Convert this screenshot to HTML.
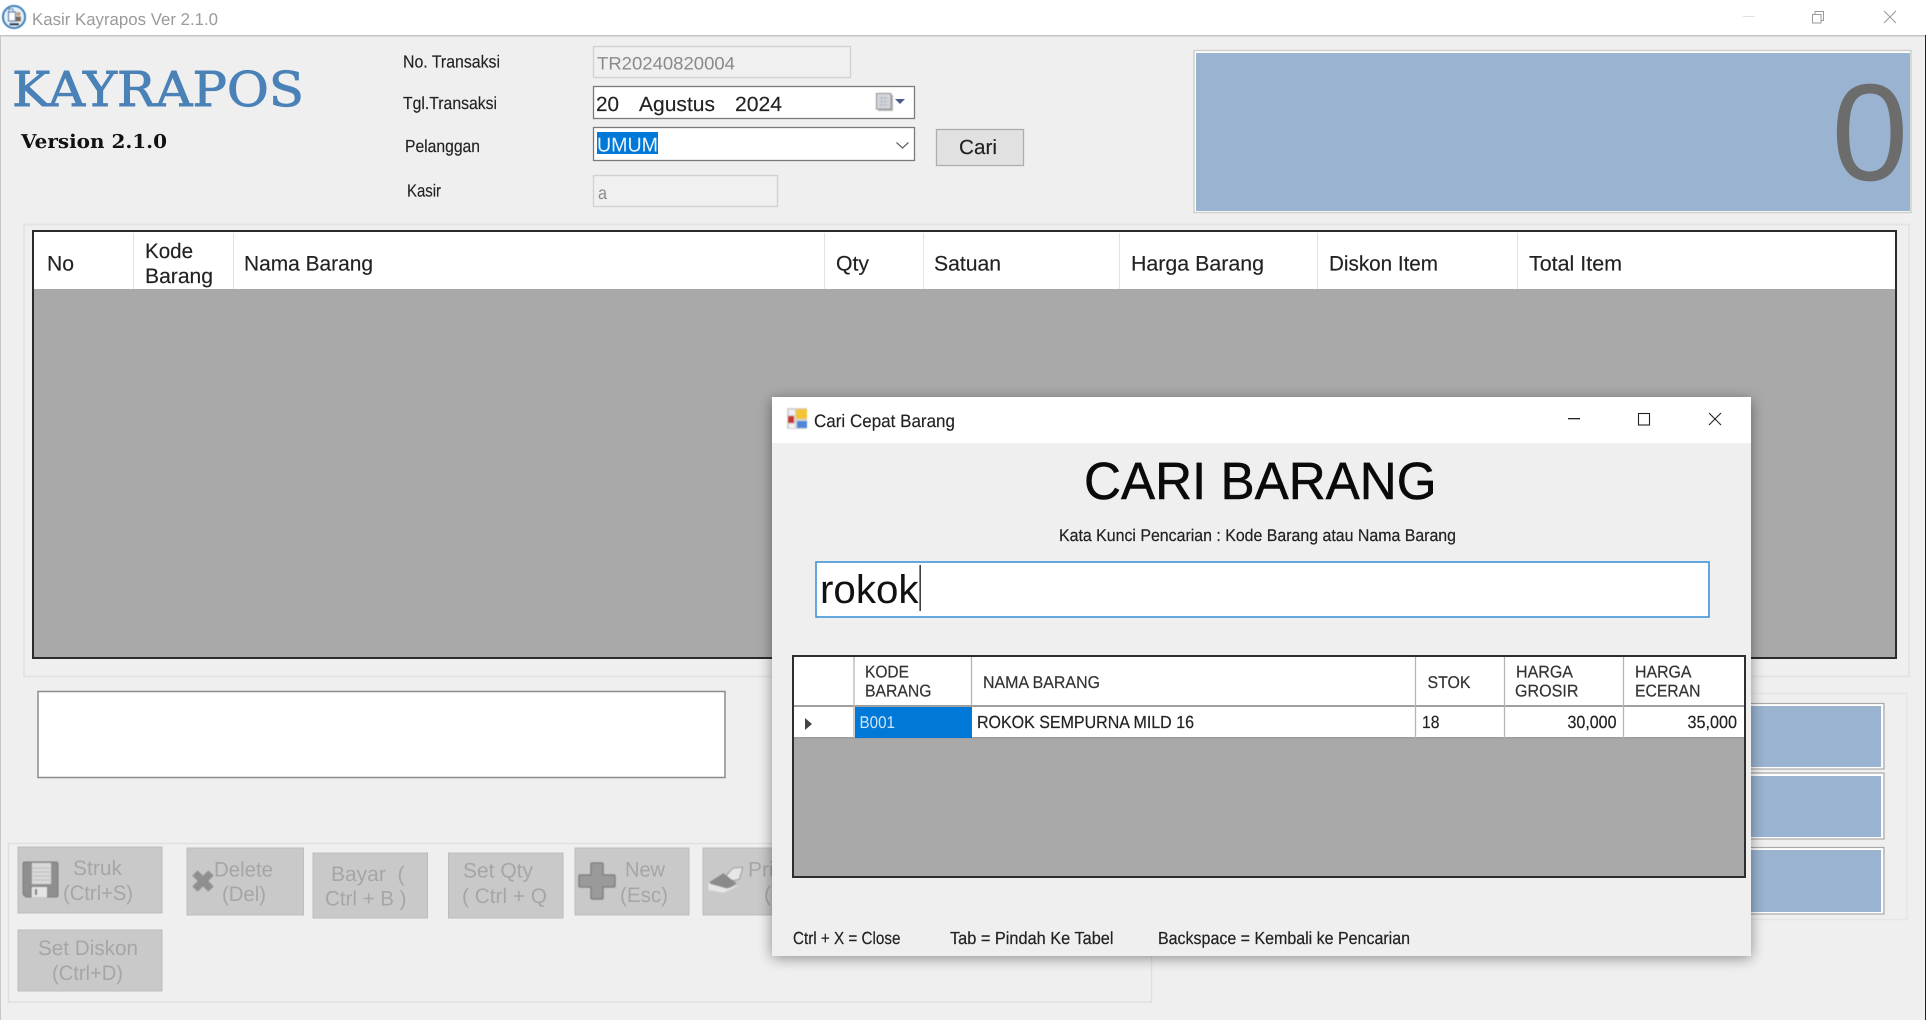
<!DOCTYPE html>
<html><head><meta charset="utf-8"><title>Kasir Kayrapos Ver 2.1.0</title>
<style>
html,body{margin:0;padding:0;background:#efefef;width:1926px;height:1020px;overflow:hidden}
svg{display:block}
text{font-family:"Liberation Sans",sans-serif;text-rendering:geometricPrecision;white-space:pre}
.lb{font-size:17.5px;fill:#222;stroke:#222;stroke-width:.15}
.h{font-size:21px;fill:#222;stroke:#222;stroke-width:.15}
.b{font-size:21px;fill:#a6a6a6}
.m{font-size:17px;fill:#333;stroke:#333;stroke-width:.2}
.r{font-size:17.5px;fill:#222;stroke:#222;stroke-width:.2}
.f{font-size:17.5px;fill:#222;stroke:#222;stroke-width:.2}
.d{font-size:18px;fill:#8a8a8a}
.v{font-size:20.5px;fill:#222;stroke:#222;stroke-width:.15}
</style></head><body>
<svg xmlns="http://www.w3.org/2000/svg" width="1926" height="1020" viewBox="0 0 1926 1020">
<defs>
<filter id="sh" x="-10%" y="-10%" width="120%" height="120%"><feGaussianBlur stdDeviation="7"/></filter>
<filter id="s" x="-10%" y="-10%" width="120%" height="120%"><feGaussianBlur stdDeviation=".45"/></filter>
<clipPath id="hc"><rect x="134" y="233" width="99" height="56"/></clipPath>
</defs>
<rect width="1926" height="1020" fill="#efefef"/>
<!-- title bar -->
<rect width="1926" height="35" fill="#fff"/>
<rect y="35" width="1926" height="1.5" fill="#c4c4c4"/>
<rect x="0" y="36" width="1" height="984" fill="#c8c8c8"/>
<rect x="1925" y="35" width="1" height="985" fill="#222"/>
<g filter="url(#s)">
<circle cx="14" cy="17" r="11" fill="#e6f1fa" stroke="#2f78b5" stroke-width="2"/>
<rect x="8.500" y="12" width="7" height="9" fill="#fff" stroke="#3c74a8" stroke-width="1.200"/>
<rect x="9" y="9" width="4" height="3" fill="none" stroke="#3c74a8"/>
<circle cx="18.500" cy="14" r="2" fill="#c79a63"/>
<rect x="16" y="16.500" width="5" height="5" fill="#7d6a55"/>
<rect x="9.500" y="23" width="9.500" height="2.500" fill="#2a3f55"/>
</g>
<text x="32" y="25" font-size="17" fill="#9a9a9a" textLength="186" lengthAdjust="spacingAndGlyphs">Kasir Kayrapos Ver 2.1.0</text>
<rect x="1743" y="16" width="12" height="1" fill="#e2e2e2"/>
<path d="M1812.500 14.500h8.500v8.500h-8.500zM1815 14.500v-3h8.500v9h-2.500" fill="none" stroke="#999" stroke-width="1"/>
<path d="M1884 11l12 12M1896 11l-12 12" fill="none" stroke="#999" stroke-width="1"/>

<!-- header -->
<text x="12" y="106" font-size="48" fill="#4a82b8" stroke="#4a82b8" stroke-width=".9" style="font-family:'DejaVu Serif',serif" textLength="292" lengthAdjust="spacingAndGlyphs">KAYRAPOS</text>
<text x="21" y="148" font-size="19" font-weight="bold" fill="#111" style="font-family:'DejaVu Serif',serif" textLength="146" lengthAdjust="spacingAndGlyphs">Version 2.1.0</text>

<text class="lb" x="403" y="67.500" textLength="97" lengthAdjust="spacingAndGlyphs">No. Transaksi</text>
<text class="lb" x="403" y="109" textLength="94" lengthAdjust="spacingAndGlyphs">Tgl.Transaksi</text>
<text class="lb" x="405" y="152" textLength="75" lengthAdjust="spacingAndGlyphs">Pelanggan</text>
<text class="lb" x="407" y="196.500" textLength="34" lengthAdjust="spacingAndGlyphs">Kasir</text>

<rect x="593.500" y="46.500" width="257" height="31" fill="#f0f0f0" stroke="#d2d2d2" stroke-width="1.400"/>
<text class="d" x="597" y="69.500" textLength="138" lengthAdjust="spacingAndGlyphs">TR20240820004</text>

<rect x="593.500" y="86.500" width="321" height="32" fill="#fff" stroke="#7a7a7a" stroke-width="1.300"/>
<text class="v" x="596" y="111" textLength="23" lengthAdjust="spacingAndGlyphs">20</text>
<text class="v" x="639" y="111" textLength="76" lengthAdjust="spacingAndGlyphs">Agustus</text>
<text class="v" x="735" y="111" textLength="47" lengthAdjust="spacingAndGlyphs">2024</text>
<g filter="url(#s)">
<rect x="878" y="95" width="15" height="16" fill="#b5b5b5"/>
<rect x="876.500" y="93.500" width="14.500" height="15.500" fill="#d4d7dd" stroke="#8a8a8a"/>
<path d="M879 98h9.500M879 101.500h9.500M879 105h9.500M881.500 96v11M885 96v11" stroke="#b9bdc5" stroke-width="1"/>
</g>
<path d="M895 99h10l-5 5z" fill="#4a5a8a"/>

<rect x="593.500" y="127.500" width="321" height="33" fill="#fff" stroke="#7a7a7a" stroke-width="1.300"/>
<rect x="597" y="132" width="61" height="22" fill="#0078d7"/>
<text x="597" y="151.500" font-size="20" fill="#e8f3fc" textLength="61" lengthAdjust="spacingAndGlyphs">UMUM</text>
<path d="M896.500 142.500l6 5.500 6-5.500" fill="none" stroke="#666" stroke-width="1.300"/>

<rect x="936.500" y="129.500" width="87" height="36" fill="#e1e1e1" stroke="#adadad" stroke-width="1.300"/>
<text class="v" x="959" y="154" textLength="38" lengthAdjust="spacingAndGlyphs">Cari</text>

<rect x="593.500" y="175.500" width="184" height="31" fill="#f0f0f0" stroke="#d2d2d2" stroke-width="1.400"/>
<text class="d" x="598" y="199" textLength="9" lengthAdjust="spacingAndGlyphs">a</text>

<!-- total panel -->
<rect x="1194" y="50.500" width="717" height="162" fill="#fff" stroke="#cfcfcf" stroke-width="1.500"/>
<rect x="1196" y="53" width="714" height="158" fill="#9ab3d1"/>
<text x="1831.500" y="180" font-size="138" fill="#6c6c6c">0</text>

<!-- main grid group -->
<rect x="24" y="224.500" width="1885" height="452" fill="none" stroke="#e4e4e4" stroke-width="2"/>
<rect x="33" y="231" width="1863" height="427" fill="#a9a9a9" stroke="#2b2b2b" stroke-width="2"/>
<rect x="34" y="232" width="1861" height="57" fill="#fff"/>
<path d="M133.500 233v56M233.500 233v56M824.500 233v56M923.500 233v56M1119.500 233v56M1317.500 233v56M1517.500 233v56" stroke="#e2e2e2" stroke-width="1"/>
<text class="h" x="47" y="270.500" textLength="27" lengthAdjust="spacingAndGlyphs">No</text>
<g clip-path="url(#hc)">
<text class="h" x="145" y="258" textLength="48" lengthAdjust="spacingAndGlyphs">Kode</text>
<text class="h" x="145" y="283" textLength="68" lengthAdjust="spacingAndGlyphs">Barang</text>
</g>
<text class="h" x="244" y="270.500" textLength="129" lengthAdjust="spacingAndGlyphs">Nama Barang</text>
<text class="h" x="836" y="270.500" textLength="33" lengthAdjust="spacingAndGlyphs">Qty</text>
<text class="h" x="934" y="270.500" textLength="67" lengthAdjust="spacingAndGlyphs">Satuan</text>
<text class="h" x="1131" y="270.500" textLength="133" lengthAdjust="spacingAndGlyphs">Harga Barang</text>
<text class="h" x="1329" y="270.500" textLength="109" lengthAdjust="spacingAndGlyphs">Diskon Item</text>
<text class="h" x="1529" y="270.500" textLength="93" lengthAdjust="spacingAndGlyphs">Total Item</text>

<!-- text area -->
<rect x="38" y="691.500" width="687" height="86" fill="#fff" stroke="#8c8c8c" stroke-width="1.500"/>

<!-- right group -->
<rect x="790" y="693.500" width="1117" height="226" fill="none" stroke="#e6e6e6" stroke-width="1.500"/>
<g fill="#9ab3d1" stroke="#fff" stroke-width="2">
<rect x="1500" y="705" width="382" height="63"/>
<rect x="1500" y="775" width="382" height="63"/>
<rect x="1500" y="849" width="382" height="64"/>
</g>
<g fill="none" stroke="#a9a9a9" stroke-width="1.200">
<rect x="1500" y="703.500" width="384" height="65.500"/>
<rect x="1500" y="773" width="384" height="66"/>
<rect x="1500" y="847.500" width="384" height="66.500"/>
</g>

<!-- button group -->
<rect x="8.500" y="843.500" width="1143" height="158.500" fill="none" stroke="#e0e0e0" stroke-width="1.500"/>
<g fill="#c9c9c9" stroke="#bdbdbd">
<rect x="18" y="847" width="144" height="66"/>
<rect x="187" y="848" width="116.500" height="67"/>
<rect x="313" y="853" width="114.500" height="65"/>
<rect x="448.500" y="853" width="114.500" height="65"/>
<rect x="575" y="848" width="114" height="67"/>
<rect x="703" y="848" width="114" height="67"/>
<rect x="18" y="930" width="144" height="61"/>
</g>
<text class="b" x="73" y="875" textLength="49" lengthAdjust="spacingAndGlyphs">Struk</text>
<text class="b" x="63" y="900" textLength="70" lengthAdjust="spacingAndGlyphs">(Ctrl+S)</text>
<text class="b" x="214" y="876.500" textLength="59" lengthAdjust="spacingAndGlyphs">Delete</text>
<text class="b" x="222" y="901" textLength="44" lengthAdjust="spacingAndGlyphs">(Del)</text>
<text class="b" x="331" y="881" textLength="73.500" lengthAdjust="spacingAndGlyphs">Bayar  (</text>
<text class="b" x="325" y="905.500" textLength="81.500" lengthAdjust="spacingAndGlyphs">Ctrl + B )</text>
<text class="b" x="463" y="877.500" textLength="70" lengthAdjust="spacingAndGlyphs">Set Qty</text>
<text class="b" x="462" y="903" textLength="85" lengthAdjust="spacingAndGlyphs">( Ctrl + Q</text>
<text class="b" x="625" y="876.500" textLength="40" lengthAdjust="spacingAndGlyphs">New</text>
<text class="b" x="620" y="902" textLength="48" lengthAdjust="spacingAndGlyphs">(Esc)</text>
<text class="b" x="748" y="876.500">Print</text>
<text class="b" x="764" y="901">(Ctrl+P)</text>
<text class="b" x="38" y="955" textLength="100" lengthAdjust="spacingAndGlyphs">Set Diskon</text>
<text class="b" x="52" y="980" textLength="71" lengthAdjust="spacingAndGlyphs">(Ctrl+D)</text>
<g filter="url(#s)">
<!-- floppy -->
<path d="M23 864q0-2 2-2h31q2 0 2 2v31q0 2-2 2h-9v-10h-16v10h-3q-5 0-5-5z" fill="#8f8f8f" stroke="#7c7c7c"/>
<rect x="32" y="863" width="19" height="21" fill="#d9d9d9"/>
<path d="M33 868h17M33 872h17M33 876h17M33 880h17" stroke="#bcbcbc"/>
<rect x="32" y="887" width="15" height="10" fill="#e4e4e4"/>
<rect x="35" y="889" width="2" height="6" fill="#777"/>
<!-- x -->
<path d="M195 873l16 16M211 873l-16 16" stroke="#8f8f8f" stroke-width="7.500" fill="none"/>
<!-- plus -->
<path d="M591 864.500q0-1.500 1.500-1.500h9q1.500 0 1.500 1.500v10.500h10.500q1.500 0 1.500 1.500v9q0 1.500-1.500 1.500h-10.500v10.500q0 1.500-1.500 1.500h-9q-1.500 0-1.500-1.500v-10.500h-10.500q-1.500 0-1.500-1.500v-9q0-1.500 1.500-1.500h10.500z" fill="#9a9a9a" stroke="#818181" stroke-width="1.500"/>
<!-- printer -->
<path d="M726.700 875L732.700 868.300L742.700 867.300L739.300 879.300L728.300 881.700Z" fill="#e6e6e6" stroke="#9a9a9a"/>
<path d="M710 881.700L723.300 873.300L736.700 883.300L726.700 890L710 885Z" fill="#8a8a8a"/>
<path d="M708.300 883.300V890L723.300 892.700L740 885L726.700 888.500Z" fill="#e6e6e6"/>
</g>

<!-- modal -->
<rect x="772" y="400" width="979" height="558" fill="#000" opacity=".42" filter="url(#sh)"/>
<rect x="772" y="397" width="979" height="559" fill="#efefef"/>
<rect x="772" y="397" width="979" height="46" fill="#fff"/>
<g filter="url(#s)">
<rect x="787" y="408" width="20" height="21" fill="#d2d2d2"/>
<rect x="789" y="410" width="6" height="5" fill="#f2f2f2"/>
<rect x="796" y="409" width="11" height="10" fill="#f4c430"/>
<rect x="797" y="421" width="10" height="7" fill="#4b86d8"/>
<rect x="788" y="416" width="6" height="7" fill="#c8362e"/>
<rect x="789" y="424" width="6" height="4" fill="#f2f2f2"/>
</g>
<text x="814" y="427" font-size="18" fill="#222" stroke="#222" stroke-width=".15" textLength="141" lengthAdjust="spacingAndGlyphs">Cari Cepat Barang</text>
<rect x="1568" y="418" width="12" height="1.300" fill="#222"/>
<rect x="1638.500" y="413.500" width="11" height="11.500" fill="none" stroke="#222" stroke-width="1.100"/>
<path d="M1709 413l12 12M1721 413l-12 12" stroke="#222" stroke-width="1.100" fill="none"/>

<text x="1084" y="499" font-size="52.500" fill="#0a0a0a" stroke="#0a0a0a" stroke-width=".5" textLength="352.500" lengthAdjust="spacingAndGlyphs">CARI BARANG</text>
<text x="1059" y="541" font-size="17" fill="#222" stroke="#222" stroke-width=".2" textLength="397" lengthAdjust="spacingAndGlyphs">Kata Kunci Pencarian : Kode Barang atau Nama Barang</text>

<rect x="816" y="562" width="893" height="55" fill="#fff" stroke="#3f93d8" stroke-width="1.600"/>
<text x="820" y="603" font-size="40" fill="#111" textLength="98.500" lengthAdjust="spacingAndGlyphs">rokok</text>
<rect x="919.500" y="565" width="1.300" height="46" fill="#111"/>

<!-- modal grid -->
<rect x="793" y="656" width="952" height="221" fill="#a9a9a9" stroke="#2e2e2e" stroke-width="2"/>
<rect x="794" y="657" width="950" height="48" fill="#fff"/>
<rect x="794" y="705" width="950" height="2" fill="#a0a0a0"/>
<rect x="794" y="707" width="950" height="30" fill="#fff"/>
<rect x="794" y="737" width="950" height="1.500" fill="#9c9c9c"/>
<rect x="855" y="707" width="117" height="31" fill="#0078d7"/>
<path d="M854 657v81M971.500 657v48M1415.500 657v81M1504.500 657v81M1623.500 657v81" stroke="#b5b5b5" stroke-width="1.300" fill="none"/>
<path d="M805 718l7 6-7 6z" fill="#444"/>
<text class="m" x="865" y="677.500" textLength="44" lengthAdjust="spacingAndGlyphs">KODE</text>
<text class="m" x="865" y="696.500" textLength="66.500" lengthAdjust="spacingAndGlyphs">BARANG</text>
<text class="m" x="983" y="688" textLength="117" lengthAdjust="spacingAndGlyphs">NAMA BARANG</text>
<text class="m" x="1427.500" y="688" textLength="43" lengthAdjust="spacingAndGlyphs">STOK</text>
<text class="m" x="1516" y="677.500" textLength="57" lengthAdjust="spacingAndGlyphs">HARGA</text>
<text class="m" x="1515" y="696.500" textLength="63.500" lengthAdjust="spacingAndGlyphs">GROSIR</text>
<text class="m" x="1635" y="677.500" textLength="56.500" lengthAdjust="spacingAndGlyphs">HARGA</text>
<text class="m" x="1635" y="696.500" textLength="65.500" lengthAdjust="spacingAndGlyphs">ECERAN</text>
<text x="859.500" y="728" font-size="17" fill="#cfe4f7" textLength="35.500" lengthAdjust="spacingAndGlyphs">B001</text>
<text class="r" x="977" y="728" textLength="217" lengthAdjust="spacingAndGlyphs">ROKOK SEMPURNA MILD 16</text>
<text class="r" x="1422" y="728" textLength="17.500" lengthAdjust="spacingAndGlyphs">18</text>
<text class="r" x="1567.500" y="728" textLength="49" lengthAdjust="spacingAndGlyphs">30,000</text>
<text class="r" x="1687.500" y="728" textLength="49.500" lengthAdjust="spacingAndGlyphs">35,000</text>

<text class="f" x="793" y="944" textLength="107.500" lengthAdjust="spacingAndGlyphs">Ctrl + X = Close</text>
<text class="f" x="950" y="944" textLength="163.500" lengthAdjust="spacingAndGlyphs">Tab = Pindah Ke Tabel</text>
<text class="f" x="1158" y="944" textLength="252" lengthAdjust="spacingAndGlyphs">Backspace = Kembali ke Pencarian</text>
</svg>
</body></html>
